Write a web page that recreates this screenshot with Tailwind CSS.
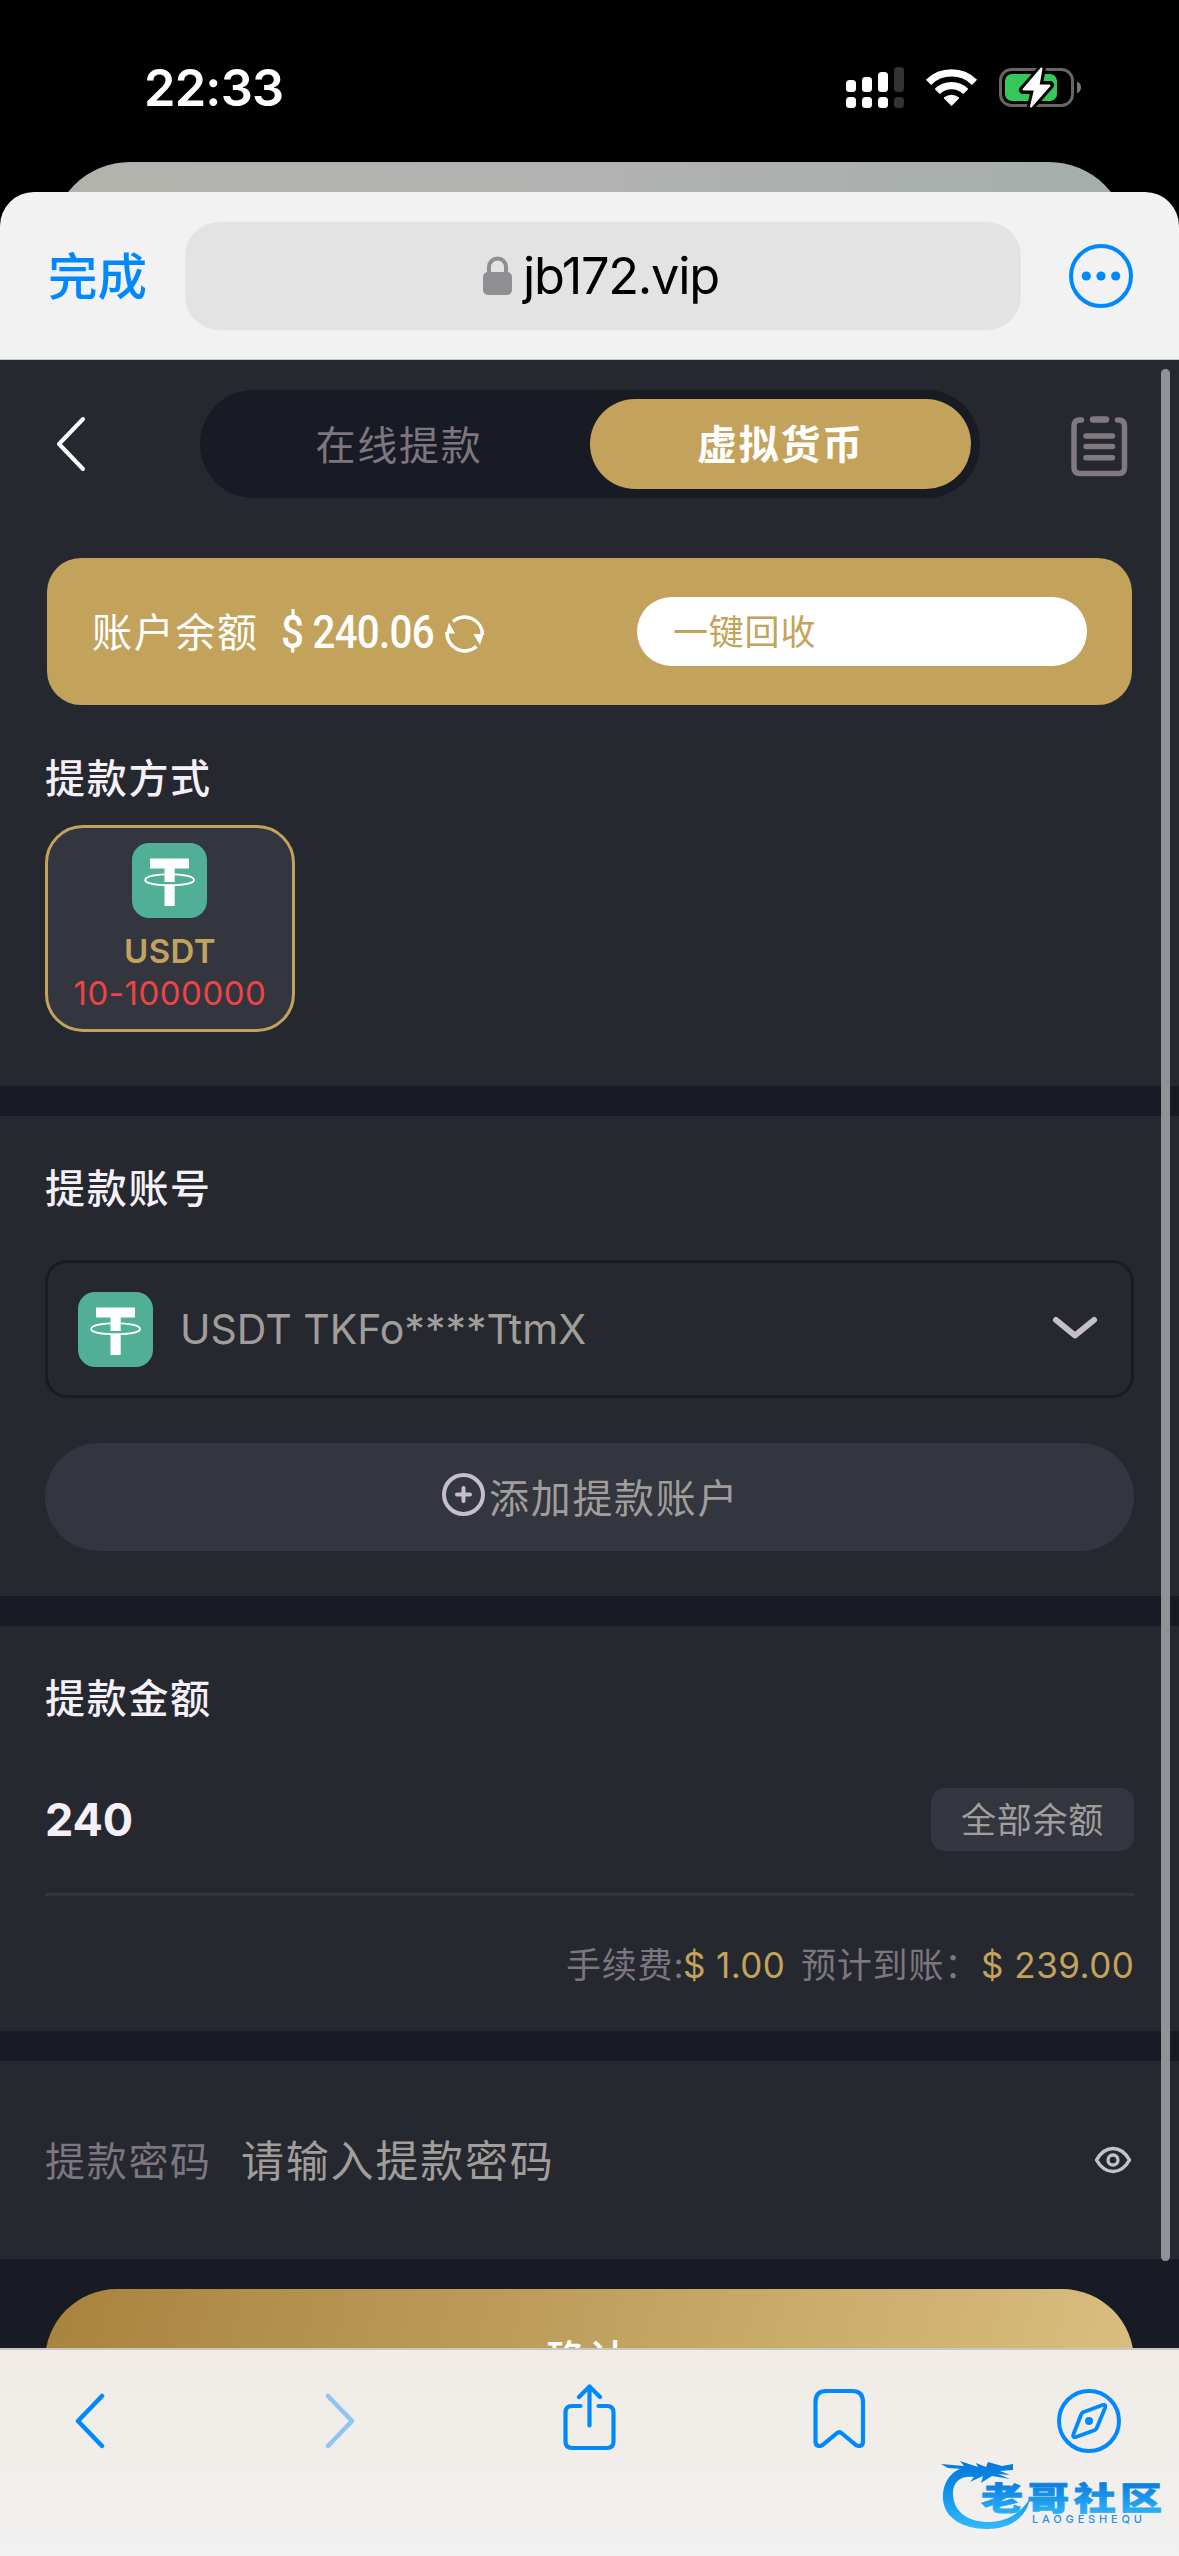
<!DOCTYPE html>
<html lang="zh-CN">
<head>
<meta charset="utf-8">
<title>虚拟货币提款</title>
<script src="https://cdn.jsdelivr.net/npm/@tailwindcss/browser@4"></script>
</head>
<body class="bg-black">
<svg width="0" height="0" class="absolute">
  <symbol id="usdt" viewBox="0 0 75 75">
    <rect width="75" height="75" rx="17" fill="#50af95"/>
    <path d="M18 15.5H57V25.500H18ZM32.500 25H42.700V39H32.500ZM32.500 42H42.700V63H32.500Z" fill="#fff"/>
    <path d="M32.500 31.300C21 31.800 13.200 34 13.200 37C13.200 40.300 24 42.200 37.500 42.200S62 40.300 62 37C62 34 54 31.800 42.700 31.300" fill="none" stroke="#fff" stroke-width="1.700"/>
  </symbol>
</svg>
<div class="relative w-[1179px] h-[2556px] overflow-hidden bg-black flex flex-col font-['Inter','Noto_Sans_CJK_SC',sans-serif]">
  <!-- status bar -->
  <div class="h-[192px] shrink-0 flex items-start justify-between pl-[144px] pr-[97px]">
    <div class="mt-[58px] h-[60px] leading-[60px] text-[50.500px] font-semibold text-white tracking-[-0.8px]">22:33</div>
    <svg class="mt-[60px]" width="237" height="56" viewBox="845 60 237 56">
      <g fill="#fff">
        <rect x="846" y="80" width="10" height="12" rx="3.500"/><rect x="862" y="77" width="10" height="15" rx="3.500"/><rect x="878" y="72" width="10" height="20" rx="3.500"/>
        <rect x="846" y="97" width="10" height="11" rx="3.500"/><rect x="862" y="97" width="10" height="11" rx="3.500"/><rect x="878" y="97" width="10" height="11" rx="3.500"/>
      </g>
      <g fill="#333"><rect x="894" y="67" width="10" height="25" rx="3.500"/><rect x="894" y="97" width="10" height="11" rx="3.500"/></g>
      <g fill="none" stroke="#fff" stroke-width="7.300">
        <path d="M928.500 82.300A33 33 0 0 1 974.500 82.300"/><path d="M937.200 91.500A20.500 20.500 0 0 1 965.800 91.500"/>
      </g>
      <path d="M951.500 106L944 98.500Q943.500 97.800 944.300 97.200A11.500 11.500 0 0 1 958.700 97.200Q959.500 97.800 959 98.500Z" fill="#fff"/>
      <rect x="1000.500" y="69.500" width="72" height="36" rx="11" fill="none" stroke="#666" stroke-width="3"/>
      <path d="M1077 81.500Q1081 83 1081 87.300T1077 93.200Z" fill="#777"/>
      <rect x="1005" y="74" width="52" height="27" rx="7" fill="#34c759"/>
      <path d="M1042 68.500L1023 90H1035L1031 106.500L1050 85H1038.500Z" fill="#fff" stroke="#000" stroke-width="8" stroke-linejoin="round"/>
      <path d="M1041.500 68.500L1023.500 89.500H1035L1031 106.500L1049.500 85.500H1038.500Z" fill="#fff" stroke="#fff" stroke-width="2" stroke-linejoin="round"/>
    </svg>
  </div>
  <div class="absolute top-[162px] left-[51px] w-[1077px] h-[80px] rounded-t-[79px] bg-linear-to-r from-[#b3b3ad] via-[#b2b2b2] to-[#a4aeab]"></div>

  <!-- browser header -->
  <div class="relative h-[168px] shrink-0 rounded-t-[34px] bg-[#f2f2f2] border-b border-[#c4c5c7] flex items-center pl-[48px] pr-[46px]">
    <div class="w-[137px] pt-[3px] text-[49.500px] font-medium text-[#0088ff] leading-[60px]">完成</div>
    <div class="w-[836px] h-[108px] rounded-[34px] bg-[#e3e3e3] flex items-center">
      <svg width="29" height="40" viewBox="0 0 29 40" class="ml-[298px] mr-[11px]"><rect y="16" width="29" height="23" rx="5" fill="#8e8e93"/><path d="M6 18V11A8.500 8.500 0 0 1 23 11V18" fill="none" stroke="#8e8e93" stroke-width="4"/></svg>
      <span class="text-[50.500px] text-black tracking-[-1.300px] leading-[60px]">jb172.vip</span>
    </div>
    <svg class="ml-auto" width="64" height="64" viewBox="0 0 64 64"><circle cx="32" cy="32" r="30" fill="none" stroke="#0088ff" stroke-width="4"/><g fill="#0088ff"><circle cx="17.300" cy="32" r="4.600"/><circle cx="32" cy="32" r="4.600"/><circle cx="46.700" cy="32" r="4.600"/></g></svg>
  </div>

  <!-- page -->
  <div class="relative h-[1988px] shrink-0 overflow-hidden bg-[#181b23] flex flex-col gap-[30px]">
    <section class="h-[726px] shrink-0 bg-[#25282f] px-[45px] pt-[30px] flex flex-col">
      <div class="h-[108px] flex items-center">
        <svg class="ml-[10px]" width="32" height="56" viewBox="0 0 32 56"><path d="M28 3L4 28L28 53" fill="none" stroke="#fff" stroke-width="4" stroke-linecap="round" stroke-linejoin="round"/></svg>
        <div class="ml-[113px] w-[780px] h-[108px] rounded-full bg-[#181b23] flex items-center p-[9px] text-[40px] tracking-[1.700px]">
          <div class="w-[381px] text-center pt-[3px] pr-[1px] text-[#7d767f]">在线提款</div>
          <div class="w-[381px] h-[90px] leading-[92px] rounded-full bg-[#c3a35b] text-white font-bold text-center">虚拟货币</div>
        </div>
        <svg class="ml-[91px] mt-[5px]" width="57" height="62" viewBox="0 0 57 62"><g fill="none" stroke="#80797f" stroke-width="5.500" stroke-linecap="round"><path d="M10.500 4H9Q3 4 3 10V51.500Q3 57.500 9 57.500H47.500Q53.500 57.500 53.500 51.500V10Q53.500 4 47.500 4H46.500"/><path d="M22 3.500H35" stroke-width="6.500"/><path d="M15 20H41.500M15 30.500H41.500M15 41.800H41.500"/></g></svg>
      </div>
      <div class="mt-[60px] mx-[2px] h-[147px] rounded-[34px] bg-[#c3a35b] flex items-center pl-[45px] pr-[45px] text-white">
        <span class="w-[167px] pt-[3px] whitespace-nowrap text-[40px] tracking-[1.700px]">账户余额</span>
        <span class="ml-[22px] pt-[2px] text-[46px] font-medium font-['Roboto'] tracking-[-0.8px] w-[164px] whitespace-nowrap origin-left scale-x-[.875]">$ 240.06</span>
        <svg class="mt-[4px]" width="40" height="40" viewBox="0 0 40 40"><g fill="none" stroke="#fff" stroke-width="3.500"><path d="M8 7.500A17.800 17.800 0 0 1 37.500 21"/><path d="M31.500 32.500A17.800 17.800 0 0 1 2 18"/></g><path d="M4 8.500L10 19.500H1ZM28.500 20H38.500L35 31Z" fill="#fff"/></svg>
        <div class="ml-auto w-[450px] h-[69px] rounded-full bg-white text-[#c3a35b] text-[35px] leading-[71px] pl-[36px] tracking-[0.8px]">一键回收</div>
      </div>
      <h2 class="mt-[44px] h-[60px] leading-[60px] text-[40px] font-medium tracking-[1.700px] text-[#f5f0f8]">提款方式</h2>
      <div class="mt-[16px] w-[250px] h-[207px] rounded-[38px] border-[3px] border-[#c3a35b] bg-[#33353f] flex flex-col items-center pt-[15px]">
        <svg class="mr-[1px]" width="75" height="75"><use href="#usdt"/></svg>
        <div class="mt-[12px] h-[42px] leading-[42px] text-[33px] font-semibold tracking-[0.4px] text-[#c3a35b]">USDT</div>
        <div class="h-[42px] leading-[42px] text-[33px] tracking-[0.5px] text-[#ef4444]">10-1000000</div>
      </div>
    </section>

    <section class="h-[480px] shrink-0 bg-[#25282f] px-[45px] pt-[43px] flex flex-col">
      <h2 class="h-[60px] leading-[60px] text-[40px] font-medium tracking-[1.700px] text-[#f5f0f8]">提款账号</h2>
      <div class="mt-[41px] h-[138px] rounded-[22px] border-[3px] border-[#181b23] flex items-center pl-[30px] pr-[33px]">
        <svg width="75" height="75"><use href="#usdt"/></svg>
        <span class="ml-[27px] pt-[2px] text-[41px] tracking-[0px] text-[#a09d9a]">USDT TKFo****TtmX</span>
        <svg class="ml-auto" width="46" height="26" viewBox="0 0 46 26"><path d="M4 4L23 19.500L42 4" fill="none" stroke="#c5bfcc" stroke-width="6" stroke-linecap="round" stroke-linejoin="round"/></svg>
      </div>
      <div class="mt-[45px] h-[108px] rounded-full bg-[#33353f] flex items-center text-[#a09d9a] text-[40px] tracking-[1.700px] pl-[397px]">
        <svg class="mr-[4px] -mt-[5px]" width="43" height="43" viewBox="0 0 43 43"><circle cx="21.500" cy="21.500" r="19.500" fill="none" stroke="#c5bfcc" stroke-width="4"/><path d="M21.500 15V28M15 21.500H28" stroke="#c5bfcc" stroke-width="4" stroke-linecap="round"/></svg>
        <span class="pt-[3px]">添加提款账户</span>
      </div>
    </section>

    <section class="h-[405px] shrink-0 bg-[#25282f] px-[45px] pt-[43px] flex flex-col">
      <h2 class="h-[60px] leading-[60px] text-[40px] font-medium tracking-[1.700px] text-[#f5f0f8]">提款金额</h2>
      <div class="mt-[59px] h-[63px] flex items-center justify-between">
        <span class="text-[45px] pt-px font-bold tracking-[-0.2px] text-[#f5f0f8]">240</span>
        <span class="w-[203px] h-[63px] leading-[64px] rounded-[14px] bg-[#33353f] text-[#a09d9a] text-[35px] tracking-[0.8px] text-center">全部余额</span>
      </div>
      <div class="mt-[42px] h-[3px] shrink-0 bg-[#33353b]"></div>
      <div class="mt-[44px] h-[50px] leading-[50px] flex justify-end text-[35px] whitespace-nowrap text-[#7d767f]">
        <span class="w-[117px] tracking-[0.8px]">手续费:</span><span class="w-[118px] tracking-[0.4px] text-[#c3a35b]">$ 1.00</span><span class="w-[180px] tracking-[0.8px]">预计到账：</span><span class="w-[153px] tracking-[0.5px] text-[#c3a35b]">$ 239.00</span>
      </div>
    </section>

    <section class="h-[198px] shrink-0 bg-[#25282f] px-[45px] flex items-center">
      <span class="w-[196px] pt-[3px] text-[40px] tracking-[1.700px] text-[#7d767f]">提款密码</span>
      <span class="pt-[3px] text-[43px] tracking-[1.8px] text-[#a09d9a]">请输入提款密码</span>
      <svg class="ml-auto mr-[2px]" width="38" height="28" viewBox="0 0 38 28"><path d="M2.500 14Q9 2.500 19 2.500T35.500 14Q29 25.500 19 25.500T2.500 14Z" fill="none" stroke="#c0c2cc" stroke-width="3.500" stroke-linejoin="round"/><circle cx="19" cy="14" r="5" fill="none" stroke="#c0c2cc" stroke-width="3.300"/></svg>
    </section>
    <div class="mx-[45px] h-[144px] shrink-0 rounded-full bg-linear-[105deg] from-[#a8833e] to-[#dabf80] text-white text-[41px] font-medium tracking-[1px] text-center leading-[142px] pr-[3px]">确认</div>
    <div class="absolute right-[9px] top-[9px] w-[9px] h-[1892px] rounded-full bg-[#929296]"></div>
  </div>

  <!-- browser toolbar -->
  <div class="relative h-[208px] shrink-0 border-t-2 border-[#c9c6c6] bg-linear-to-b from-[#f0ebe5] via-[#f1eeea] to-[#f1f1f1]">
    <div class="flex items-center h-[142px] pl-[74px]">
      <svg width="32" height="56" viewBox="0 0 32 56"><path d="M28 3L4 28L28 53" fill="none" stroke="#0088ff" stroke-width="4.500" stroke-linecap="round" stroke-linejoin="round"/></svg>
      <svg class="ml-[218px]" width="32" height="56" viewBox="0 0 32 56"><path d="M4 3L28 28L4 53" fill="none" stroke="#90c4f3" stroke-width="4.500" stroke-linecap="round" stroke-linejoin="round"/></svg>
      <svg width="54" height="68" viewBox="562 2384 54 68" class="ml-[206px] -mt-[6px]"><path d="M580.500 2406H572Q565.500 2406 565.500 2412.500V2441.500Q565.500 2448 572 2448H607Q613.500 2448 613.500 2441.500V2412.500Q613.500 2406 607 2406H598.500M589.500 2425.500V2387M579 2397L589.500 2386.500L600 2397" fill="none" stroke="#0088ff" stroke-width="4.200" stroke-linecap="round" stroke-linejoin="round"/></svg>
      <svg width="54" height="60" viewBox="812 2388 54 60" class="ml-[196px] -mt-[6px]"><path d="M826.500 2391H852Q863 2391 863 2402V2441.500Q863 2446 859 2446Q857.500 2446 856 2445L842 2433.500Q839.300 2431 836.500 2433.500L822.500 2445Q821 2446 819.500 2446Q815.500 2446 815.500 2441.500V2402Q815.500 2391 826.500 2391Z" fill="none" stroke="#0088ff" stroke-width="4.200"/></svg>
      <svg class="ml-[191px]" width="64" height="64" viewBox="0 0 64 64"><circle cx="32" cy="32" r="30" fill="none" stroke="#0088ff" stroke-width="4"/><path d="M25.500 23.500L45.500 16Q49.500 15 48 19L40 38.500Q39.500 40 38 41L19 48Q15 49 16.500 45L24 26Q24.500 24.500 25.500 23.500Z" fill="none" stroke="#0088ff" stroke-width="3.800"/><circle cx="32" cy="32" r="4" fill="#0088ff"/></svg>
    </div>
    <!-- community watermark -->
    <svg class="absolute left-[936px] top-[105px]" width="230" height="82" viewBox="936 2455 230 82">
      <defs><linearGradient id="wm" gradientUnits="userSpaceOnUse" x1="0" y1="2462" x2="0" y2="2528"><stop offset="0" stop-color="#0878dc"/><stop offset=".4" stop-color="#0b8eea"/><stop offset="1" stop-color="#33b8fb"/></linearGradient>
      <linearGradient id="wt" x1="0" y1="0" x2="0" y2="1"><stop offset=".25" stop-color="#0b7fdf"/><stop offset=".9" stop-color="#2bb3fb"/></linearGradient></defs>
      <path fill="url(#wm)" d="M975 2467C955 2465 942 2480 943 2499C944 2518 963 2529 987 2529C1009 2529 1027 2518 1030 2498C1022 2512 1007 2522 989 2522C968 2522 954 2512 953 2495C952 2482 961 2475 974 2477L970 2482L983 2476L981 2483L992 2476L1010 2479L998 2474L1010 2475L1000 2471L1013 2470V2464L1002 2466L988 2462L986 2467L976 2463L978 2467L960 2461L964 2466L941 2464L948 2468L962 2469Z"/>
      <text transform="translate(981 2509.500) scale(1 .75)" textLength="181" lengthAdjust="spacing" font-family="Noto Sans CJK SC, sans-serif" font-weight="900" font-size="42" fill="url(#wt)" stroke="url(#wt)" stroke-width="1">老哥社区</text>
      <text x="1032" y="2523" textLength="110" font-family="Inter, sans-serif" font-weight="500" font-size="11" fill="#2592e4">LAOGESHEQU</text>
    </svg>
  </div>
</div>
</body>
</html>
